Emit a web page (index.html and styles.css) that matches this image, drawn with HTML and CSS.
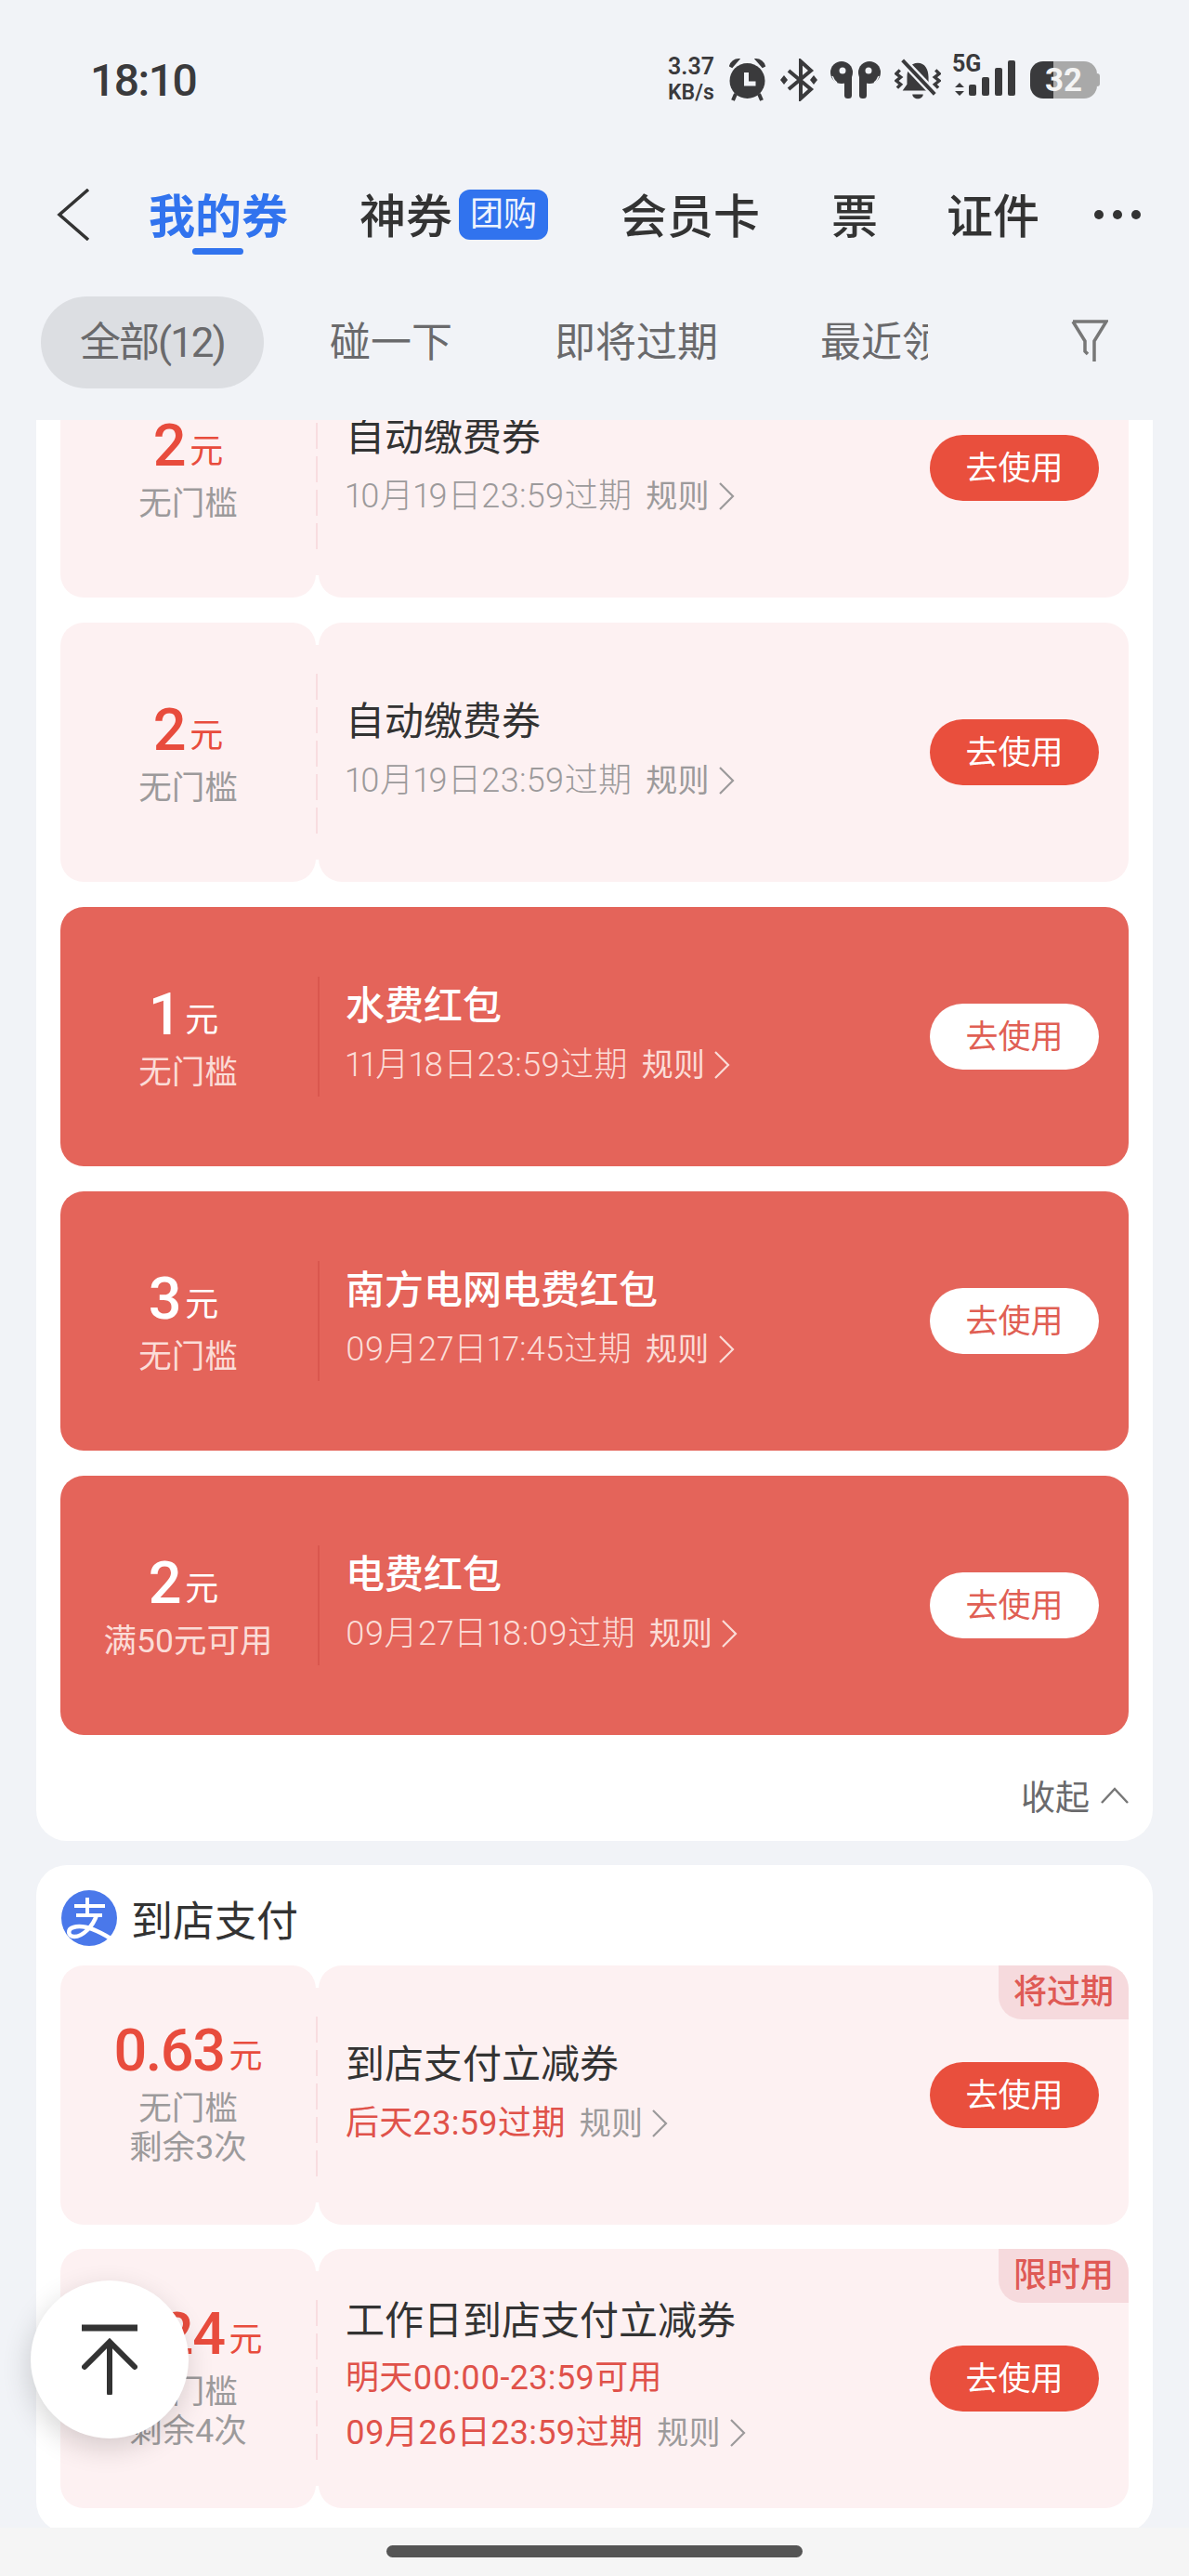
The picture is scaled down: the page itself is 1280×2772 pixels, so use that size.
FILE: index.html
```html
<!DOCTYPE html>
<html lang="zh-CN">
<head>
<meta charset="utf-8">
<title>我的券</title>
<link rel="stylesheet" href="styles.css">
</head>
<body>
<div class="page">
  <header class="header">
    <div class="status">
      <span class="status__time">18:10</span>
      <div class="status__icons">
        <div class="speed"><span>3.37</span><span class="speed__unit">KB/s</span></div>
        <svg class="ic ic--alarm" viewBox="0 0 43 46"><path d="M1 8c1-4 5-7 9-7l-7 8z M38 8c-1-4-5-7-9-7l7 8z" fill="#3a3a3c" stroke="#3a3a3c" stroke-width="2"/><path d="M7 38l-3 7M32 38l3 7" stroke="#3a3a3c" stroke-width="4" fill="none"/><circle cx="19.500" cy="24" r="19" fill="#3a3a3c"/><path d="M18.500 15v12h10" stroke="#f1f3f7" stroke-width="5" fill="none"/></svg>
        <svg class="ic ic--bt" viewBox="0 0 42 46"><path d="M9 13l24 20-11 10V3l11 10L9 33" stroke="#3a3a3c" stroke-width="4" fill="none" stroke-linejoin="miter"/><path d="M4 18l4 5-4 5-4-5zM36 18l4 5-4 5-4-5z" fill="#3a3a3c"/></svg>
        <svg class="ic ic--buds" viewBox="0 0 57 42"><circle cx="12" cy="13" r="12" fill="#3a3a3c"/><rect x="15" y="13" width="8" height="28" rx="3.500" fill="#3a3a3c"/><circle cx="13" cy="11" r="3.500" fill="#f1f3f7"/><path d="M2 17c1 3 2 5 5 7" stroke="#f1f3f7" stroke-width="1.500" fill="none"/><circle cx="42" cy="13" r="12" fill="#3a3a3c"/><rect x="31" y="13" width="8" height="28" rx="3.500" fill="#3a3a3c"/><circle cx="41" cy="11" r="3.500" fill="#f1f3f7"/><path d="M52 17c-1 3-2 5-5 7" stroke="#f1f3f7" stroke-width="1.500" fill="none"/></svg>
        <svg class="ic ic--bell" viewBox="0 0 52 46"><path d="M26 4c8 0 12 7 12 16v8l5 7H9l5-7V20c0-9 4-16 12-16z" fill="#3a3a3c"/><path d="M20 39h12c0 3-3 5-6 5s-6-2-6-5z" fill="#3a3a3c"/><path d="M8 0l38 40" stroke="#f1f3f7" stroke-width="9"/><path d="M9 1l36 38" stroke="#3a3a3c" stroke-width="4"/><path d="M6 12l-4 4 5 4-5 4 5 4-4 4M46 12l4 4-5 4 5 4-5 4 4 4" stroke="#3a3a3c" stroke-width="3.500" fill="none"/></svg>
        <div class="net">
          <span class="net__label">5G</span>
          <svg class="net__bars" viewBox="0 0 72 46"><path d="M3 31l5-5 5 5zM3 35l5 5 5-5z" fill="#3a3a3c"/><rect x="18" y="28" width="8" height="12" rx="2" fill="#3a3a3c"/><rect x="32" y="20" width="8" height="20" rx="2" fill="#3a3a3c"/><rect x="46" y="10" width="8" height="30" rx="2" fill="#3a3a3c"/><rect x="60" y="2" width="8" height="38" rx="2" fill="#3a3a3c"/></svg>
        </div>
        <div class="battery"><span>32</span></div>
      </div>
    </div>
    <nav class="nav">
      <svg class="nav__back" viewBox="0 0 36 56"><path d="M34 1L3 28l31 27" stroke="#333" stroke-width="3.500" fill="none"/></svg>
      <a class="nav__item nav__item--active">我的券</a>
      <a class="nav__item nav__item--group">神券<span class="nav__badge">团购</span></a>
      <a class="nav__item nav__item--card">会员卡</a>
      <a class="nav__item nav__item--ticket">票</a>
      <a class="nav__item nav__item--id">证件</a>
      <div class="nav__more"><i></i><i></i><i></i></div>
    </nav>
    <div class="filter">
      <div class="filter__list">
        <span class="filter__item filter__item--on">全部(12)</span>
        <span class="filter__item">碰一下</span>
        <span class="filter__item">即将过期</span>
        <span class="filter__item">最近领取</span>
      </div>
      <svg class="filter__icon" viewBox="0 0 40 46"><path d="M2 2h36L25 23v22M2 2l13 21v11l3 3" stroke="#777" stroke-width="3.500" fill="none"/></svg>
    </div>
  </header>

  <main class="scroll">
    <div class="scroll__content">
      <section class="panel panel--bills">
        <div class="tickets">
          <article class="ticket">
            <div class="stub"><div class="amount"><b>2</b><span>元</span></div><div class="desc">无门槛</div></div>
            <div class="main"><div class="info"><h3 class="title">自动缴费券</h3><div class="date"><span>10月19日23:59过期</span><span class="rule">规则</span><svg class="chev" viewBox="0 0 17 30"><path d="M1 1l14 14L1 29" fill="none" stroke="#9c9a9b" stroke-width="2.200"/></svg></div></div><a class="btn">去使用</a></div>
          </article>
          <article class="ticket">
            <div class="stub"><div class="amount"><b>2</b><span>元</span></div><div class="desc">无门槛</div></div>
            <div class="main"><div class="info"><h3 class="title">自动缴费券</h3><div class="date"><span>10月19日23:59过期</span><span class="rule">规则</span><svg class="chev" viewBox="0 0 17 30"><path d="M1 1l14 14L1 29" fill="none" stroke="#9c9a9b" stroke-width="2.200"/></svg></div></div><a class="btn">去使用</a></div>
          </article>
          <article class="ticket ticket--red">
            <div class="stub"><div class="amount"><b>1</b><span>元</span></div><div class="desc">无门槛</div></div>
            <div class="main"><div class="info"><h3 class="title">水费红包</h3><div class="date"><span>11月18日23:59过期</span><span class="rule">规则</span><svg class="chev" viewBox="0 0 17 30"><path d="M1 1l14 14L1 29" fill="none" stroke="#fadcd7" stroke-width="2.200"/></svg></div></div><a class="btn">去使用</a></div>
          </article>
          <article class="ticket ticket--red">
            <div class="stub"><div class="amount"><b>3</b><span>元</span></div><div class="desc">无门槛</div></div>
            <div class="main"><div class="info"><h3 class="title">南方电网电费红包</h3><div class="date"><span>09月27日17:45过期</span><span class="rule">规则</span><svg class="chev" viewBox="0 0 17 30"><path d="M1 1l14 14L1 29" fill="none" stroke="#fadcd7" stroke-width="2.200"/></svg></div></div><a class="btn">去使用</a></div>
          </article>
          <article class="ticket ticket--red">
            <div class="stub"><div class="amount"><b>2</b><span>元</span></div><div class="desc">满50元可用</div></div>
            <div class="main"><div class="info"><h3 class="title">电费红包</h3><div class="date"><span>09月27日18:09过期</span><span class="rule">规则</span><svg class="chev" viewBox="0 0 17 30"><path d="M1 1l14 14L1 29" fill="none" stroke="#fadcd7" stroke-width="2.200"/></svg></div></div><a class="btn">去使用</a></div>
          </article>
        </div>
        <div class="collapse"><span>收起</span><svg class="collapse__icon" viewBox="0 0 30 18"><path d="M1 17L15 2l14 15" fill="none" stroke="#777" stroke-width="2.500"/></svg></div>
      </section>

      <section class="panel panel--store">
        <div class="panel__head">
          <svg class="alipay" viewBox="0 0 60 60"><circle cx="30" cy="30" r="30" fill="#4a78ea"/><path d="M14 17h33M16 27h28M28 8v19" stroke="#fff" stroke-width="4" fill="none"/><path d="M38 27C34 39 23 50 14 50 7 50 6 42 13 40c9-3 24 2 40 12" stroke="#fff" stroke-width="4.500" fill="none"/></svg>
          <h2 class="panel__title">到店支付</h2>
        </div>
        <div class="tickets">
          <article class="ticket">
            <div class="stub stub--multi"><div class="amount"><b>0.63</b><span>元</span></div><div class="desc">无门槛</div><div class="desc">剩余3次</div></div>
            <div class="main"><span class="tag">将过期</span><div class="info"><h3 class="title">到店支付立减券</h3><div class="date"><span class="date__red">后天23:59过期</span><span class="rule">规则</span><svg class="chev" viewBox="0 0 17 30"><path d="M1 1l14 14L1 29" fill="none" stroke="#9c9a9b" stroke-width="2.200"/></svg></div></div><a class="btn">去使用</a></div>
          </article>
          <article class="ticket">
            <div class="stub stub--multi"><div class="amount"><b>0.24</b><span>元</span></div><div class="desc">无门槛</div><div class="desc">剩余4次</div></div>
            <div class="main"><span class="tag">限时用</span><div class="info info--three"><h3 class="title">工作日到店支付立减券</h3><div class="date"><span class="date__red">明天00:00-23:59可用</span></div><div class="date"><span class="date__red">09月26日23:59过期</span><span class="rule">规则</span><svg class="chev" viewBox="0 0 17 30"><path d="M1 1l14 14L1 29" fill="none" stroke="#9c9a9b" stroke-width="2.200"/></svg></div></div><a class="btn">去使用</a></div>
          </article>
        </div>
      </section>
    </div>
  </main>

  <div class="homebar"><i></i></div>

  <a class="totop"><svg viewBox="0 0 60 76"><path d="M0 4h60" stroke="#333" stroke-width="7"/><path d="M30 74V22M3 46l27-27 27 27" stroke="#333" stroke-width="6" fill="none" stroke-linecap="round"/></svg></a>
</div>
</body>
</html>
```
FILE: styles.css
```css
* { box-sizing: border-box; }
html, body { margin: 0; padding: 0; }
body {
  background: #f1f3f7;
  color: #333;
  font-family: Roboto, "Noto Sans CJK SC", sans-serif;
}
h2, h3 { margin: 0; font-weight: 400; }

.page {
  position: relative;
  width: 1280px;
  height: 2772px;
  overflow: hidden;
  display: flex;
  flex-direction: column;
}

/* Header */
.header { height: 452px; flex: none; background: #f1f3f7; }

.status {
  height: 172px;
  padding: 0 96px 0 97px;
  display: flex;
  align-items: center;
  justify-content: space-between;
}
.status__time { font-size: 48px; font-weight: 500; color: #3a3a3c; letter-spacing: -1.500px; }
.status__icons { display: flex; align-items: center; gap: 12px; }
.speed {
  width: 54px;
  display: flex;
  flex-direction: column;
  font-size: 25px;
  line-height: 28px;
  font-weight: 600;
  color: #3a3a3c;
  white-space: nowrap;
}
.speed__unit { font-size: 23px; }
.ic { display: block; flex: none; }
.ic--alarm { width: 43px; height: 46px; }
.ic--bt { width: 42px; height: 46px; }
.ic--buds { width: 57px; height: 42px; }
.ic--bell { width: 50px; height: 46px; }
.net { position: relative; width: 72px; height: 46px; }
.net__label { position: absolute; left: 0; top: -7px; font-size: 25px; line-height: 26px; font-weight: 700; color: #3a3a3c; }
.net__bars { display: block; width: 72px; height: 46px; }
.battery {
  position: relative;
  width: 72px;
  height: 40px;
  margin-right: 3px;
  border-radius: 14px;
  background: linear-gradient(to right, #3a3a3c 25px, #a9a9a9 25px);
  display: flex;
  align-items: center;
  justify-content: center;
  color: #f4f4f4;
  font-size: 35px;
  font-weight: 700;
}
.battery::after {
  content: "";
  position: absolute;
  right: -3px;
  top: 13px;
  width: 3px;
  height: 14px;
  border-radius: 0 3px 3px 0;
  background: #a9a9a9;
}

.nav { height: 118px; padding-left: 61px; display: flex; align-items: center; }
.nav__back { width: 36px; height: 56px; flex: none; margin-right: 63px; }
.nav__item { position: relative; padding-top: 5px; font-size: 50px; line-height: 60px; font-weight: 500; color: #333; white-space: nowrap; display: flex; align-items: center; }
.nav__item--active { color: #3173ee; font-weight: 700; }
.nav__item--active::after {
  content: "";
  position: absolute;
  left: 47px;
  bottom: -10px;
  width: 55px;
  height: 7px;
  border-radius: 4px;
  background: #3173ee;
}
.nav__item--group { margin-left: 77px; }
.nav__item--card { margin-left: 78px; }
.nav__item--ticket { margin-left: 77px; }
.nav__item--id { margin-left: 74px; }
.nav__badge {
  width: 96px;
  height: 54px;
  margin: 0 0 5px 7px;
  border-radius: 12px;
  background: #3173ee;
  color: #eef3fd;
  font-size: 36px;
  font-weight: 400;
  text-align: center;
  line-height: 54px;
}
.nav__more { margin-left: 59px; display: flex; gap: 10px; }
.nav__more i { width: 10px; height: 10px; border-radius: 50%; background: #333; }

.filter { margin-top: 29px; height: 99px; padding-left: 44px; display: flex; align-items: center; }
.filter__list { width: 955px; height: 99px; display: flex; gap: 27px; overflow: hidden; flex: none; }
.filter__item {
  flex: none;
  height: 99px;
  padding: 0 39px 0 44px;
  border-radius: 50px;
  font-size: 44px;
  line-height: 101px;
  color: #6a6a6c;
  white-space: nowrap;
}
.filter__item--on { width: 240px; padding: 0; text-align: center; letter-spacing: -2px; background: #dcdee2; }
.filter__icon { width: 40px; height: 46px; margin-left: 154px; margin-top: -3px; flex: none; }

/* Scrolling area */
.scroll { height: 2268px; flex: none; overflow: hidden; }
.scroll__content { margin-top: -88px; }
.panel { margin: 0 39px; padding: 0 26px; background: #fff; border-radius: 33px; }
.panel--store { margin-top: 26px; padding-bottom: 26px; }
.panel--store .tickets { gap: 26px; }
.panel__head { height: 108px; padding: 6px 0 0 1px; display: flex; align-items: center; gap: 15px; }
.alipay { width: 60px; height: 60px; flex: none; }
.panel__title { font-size: 45px; color: #333; }

.tickets { display: flex; flex-direction: column; gap: 27px; }
.ticket { display: flex; height: 279px; }
.stub {
  width: 275px;
  flex: none;
  border-radius: 25px;
  background: #fdf1f2;
  display: flex;
  flex-direction: column;
  align-items: center;
  justify-content: center;
}
.stub--multi { padding-bottom: 6px; }
.amount { display: flex; align-items: baseline; gap: 5px; height: 70px; margin-bottom: 6px; line-height: 70px; color: #e84c3d; }
.amount b { font-size: 63px; font-weight: 500; letter-spacing: -1.500px; }
.amount span { font-size: 36px; transform: translateY(-3px); }
.desc { font-size: 35.500px; line-height: 42px; color: #9c9a9b; white-space: nowrap; }

.main {
  position: relative;
  flex: 1;
  margin-left: 3px;
  padding: 0 32px 0 29px;
  border-radius: 25px;
  background: #fdf1f2;
  display: flex;
  align-items: center;
  justify-content: space-between;
}
/* the join between stub and body: the two only part at their rounded corners */
.main::before {
  content: "";
  position: absolute;
  left: -3px;
  top: 24px;
  bottom: 24px;
  width: 3px;
  background: #fdf1f2;
}
.main::after {
  content: "";
  position: absolute;
  left: -3px;
  top: 55px;
  bottom: 52px;
  width: 2px;
  background: repeating-linear-gradient(to bottom, #f8dde0 0 28px, transparent 28px 36px);
}
.info { padding-bottom: 5px; }
.title { font-size: 42px; line-height: 46px; color: #333; white-space: nowrap; }
.date { margin-top: 19px; display: flex; align-items: center; font-size: 36px; font-variant-numeric: proportional-nums; letter-spacing: .3px; line-height: 42px; font-weight: 300; color: #9c9a9b; white-space: nowrap; }
.date + .date { margin-top: 17px; }
.info--three .title { margin-bottom: -2px; }
.date__red { color: #e0524a; font-weight: 400; }
.rule { margin-left: 15px; font-size: 34px; font-weight: 400; }
.chev { width: 17px; height: 30px; margin-left: 10px; flex: none; }
.btn {
  width: 182px;
  height: 71px;
  border-radius: 36px;
  background: #e94f3d;
  color: #fff;
  font-size: 35px;
  line-height: 73px;
  text-align: center;
  flex: none;
}
.tag {
  position: absolute;
  top: 0;
  right: 0;
  width: 140px;
  height: 58px;
  border-radius: 0 25px 0 25px;
  background: #f6dadd;
  color: #df5a55;
  font-size: 36px;
  font-weight: 500;
  line-height: 58px;
  text-align: center;
}

/* Red variant */
.ticket--red { border-radius: 25px; background: #e4645a; }
.ticket--red .stub, .ticket--red .main { background: transparent; }
.ticket--red .amount { margin-right: 10px; color: #fff; }
.ticket--red .desc { color: #fbdcd7; }
.ticket--red .title { color: #fff; font-weight: 500; }
.ticket--red .date { color: #fbdcd7; }
.ticket--red .main::before { display: none; }
.ticket--red .main::after { left: -1px; top: 75px; bottom: 75px; background: #d9574e; }
.ticket--red .btn { background: #fff; color: #e05f54; }

.collapse { height: 114px; padding-top: 16px; display: flex; align-items: center; justify-content: flex-end; gap: 12px; font-size: 37px; color: #6a6a6c; }
.collapse__icon { width: 30px; height: 18px; flex: none; }

.homebar { flex: 1; background: #f5f5f5; display: flex; justify-content: center; padding-top: 19px; }
.homebar i { width: 448px; height: 13px; border-radius: 7px; background: #555; }

.totop {
  position: absolute;
  left: 33px;
  top: 2454px;
  width: 170px;
  height: 170px;
  border-radius: 50%;
  background: #fff;
  box-shadow: -2px 10px 30px rgba(0, 0, 0, .16);
  display: flex;
  align-items: center;
  justify-content: center;
}
.totop svg { width: 60px; height: 76px; }
```
